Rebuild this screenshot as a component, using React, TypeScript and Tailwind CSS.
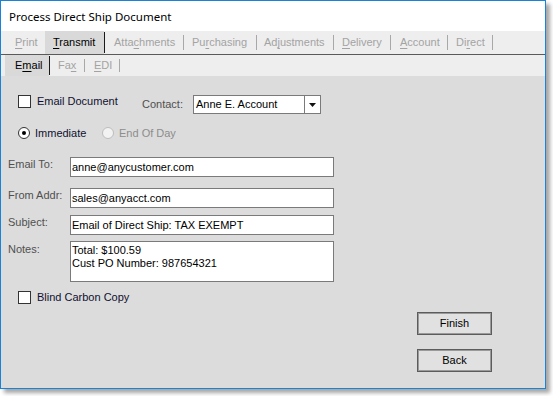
import React from "react";

type Tab = {
  label: string;
  key: number;
  width: string;
  pad: string;
  active?: boolean;
  sep?: "dark" | "light" | "none";
};

const mainTabs: Tab[] = [
  { label: "Print", key: 0, width: "w-[40px]", pad: "pl-[10px]", sep: "none" },
  { label: "Transmit", key: 0, width: "w-[59px]", pad: "pl-[8px]", active: true, sep: "dark" },
  { label: "Attachments", key: 4, width: "w-[78px]", pad: "pl-[9px]", sep: "light" },
  { label: "Purchasing", key: 2, width: "w-[72px]", pad: "pl-[8px]", sep: "light" },
  { label: "Adjustments", key: 2, width: "w-[76px]", pad: "pl-[7px]", sep: "light" },
  { label: "Delivery", key: 0, width: "w-[56px]", pad: "pl-[8px]", sep: "light" },
  { label: "Account", key: 0, width: "w-[56px]", pad: "pl-[9px]", sep: "light" },
  { label: "Direct", key: 2, width: "w-[44px]", pad: "pl-[8px]", sep: "light" },
];

const subTabs: Tab[] = [
  { label: "Email", key: 1, width: "w-[44px]", pad: "pl-[10px]", active: true, sep: "dark" },
  { label: "Fax", key: 2, width: "w-[34px]", pad: "pl-[8px]", sep: "light" },
  { label: "EDI", key: 0, width: "w-[34px]", pad: "pl-[9px]", sep: "light" },
];

function Mnemonic({ text, index }: { text: string; index: number }) {
  return (
    <>
      {text.slice(0, index)}
      <span className="underline underline-offset-[2px]">{text[index]}</span>
      {text.slice(index + 1)}
    </>
  );
}

function TabStrip({ tabs, height }: { tabs: Tab[]; height: string }) {
  return (
    <div className={`flex items-stretch pl-[4px] ${height}`}>
      {tabs.map((t) => (
        <React.Fragment key={t.label}>
          <div
            className={`${t.width} ${t.pad} flex items-center ${
              t.active ? "bg-[#d9d9d9] text-black" : "text-[#a3a3a3]"
            }`}
          >
            <span className="whitespace-nowrap">
              <Mnemonic text={t.label} index={t.key} />
            </span>
          </div>
          {t.sep === "dark" && <div className="w-px bg-[#1a1a1a] my-[1px]" />}
          {t.sep === "light" && <div className="w-px bg-[#a8a8a8] my-[4px]" />}
        </React.Fragment>
      ))}
    </div>
  );
}

function CheckBox() {
  return <div className="w-[13px] h-[13px] bg-white border border-[#333333] shrink-0" />;
}

function Radio({ checked, disabled }: { checked?: boolean; disabled?: boolean }) {
  return (
    <div
      className={`w-[12px] h-[12px] rounded-full border flex items-center justify-center shrink-0 ${
        disabled ? "border-[#bdbdbd] bg-[#f2f2f2]" : "border-[#333333] bg-white"
      }`}
    >
      {checked && <div className="w-[4px] h-[4px] rounded-full bg-black" />}
    </div>
  );
}

function Field({
  label,
  value,
  className,
}: {
  label: string;
  value: string;
  className?: string;
}) {
  return (
    <div className={`flex items-start pl-[7px] ${className ?? ""}`}>
      <div className="w-[62px] text-[#505050] leading-[13px] pt-[1px]">{label}</div>
      <div className="w-[264px] h-[20px] bg-white border border-[#7a7a7a] pl-[1px] flex items-center text-black leading-[13px]">
        {value}
      </div>
    </div>
  );
}

function Button({ label, className }: { label: string; className?: string }) {
  return (
    <div
      className={`w-[75px] h-[23px] bg-[#e1e1e1] border border-[#5c5c5c] shadow-[inset_0_0_0_1px_#9a9a9a] flex items-center justify-center text-black ${
        className ?? ""
      }`}
    >
      {label}
    </div>
  );
}

export default function App() {
  return (
    <div className="w-[553px] h-[396px] bg-white overflow-hidden">
      <div
        className="w-[546px] h-[389px] border border-[#1883d7] flex flex-col shadow-[4px_4px_4px_rgba(0,0,0,0.35)] text-[11px] leading-[13px]"
        style={{ fontFamily: '"Liberation Sans", Arial, sans-serif' }}
      >
        {/* Title bar */}
        <div
          className="h-[30px] bg-white flex items-center pl-[8px] text-[11.5px] text-black"
          style={{ fontFamily: '"Noto Sans", "Segoe UI", sans-serif' }}
        >
          Process Direct Ship Document
        </div>

        {/* Main tabs */}
        <div className="bg-[#eeeeee] border-b border-[#5a5a5a]">
          <TabStrip tabs={mainTabs} height="h-[23px]" />
        </div>

        {/* Sub tabs */}
        <div className="bg-[#eeeeee]">
          <TabStrip tabs={subTabs} height="h-[21px]" />
        </div>

        {/* Content */}
        <div className="flex-1 bg-[#dcdcdc] pt-[19px] flex flex-col">
          <div className="flex items-start h-[19px]">
            <div className="flex items-center gap-[6px] pl-[17px] w-[141px]">
              <CheckBox />
              <span className="text-[#101030]">Email Document</span>
            </div>
            <div className="flex items-center h-[19px]">
              <span className="w-[51px] text-[#505050]">Contact:</span>
              <div className="w-[128px] h-[19px] bg-white border border-[#7a7a7a] flex items-stretch">
                <div className="flex-1 pl-[2px] flex items-center text-black">Anne E. Account</div>
                <div className="w-[16px] border-l border-[#7a7a7a] flex items-center justify-center">
                  <svg width="7" height="4" viewBox="0 0 7 4">
                    <path d="M0 0H7L3.5 4Z" fill="#111111" />
                  </svg>
                </div>
              </div>
            </div>
          </div>

          <div className="flex items-center h-[12px] mt-[13px] pl-[17px]">
            <Radio checked />
            <span className="ml-[5px] w-[67px] text-[#101030]">Immediate</span>
            <Radio disabled />
            <span className="ml-[5px] text-[#8c8c8c]">End Of Day</span>
          </div>

          <Field label="Email To:" value="anne@anycustomer.com" className="mt-[18px]" />
          <Field label="From Addr:" value="sales@anyacct.com" className="mt-[11px]" />
          <Field label="Subject:" value="Email of Direct Ship: TAX EXEMPT" className="mt-[7px]" />

          <div className="flex items-start pl-[7px] mt-[6px]">
            <div className="w-[62px] text-[#505050] pt-[2px]">Notes:</div>
            <div className="w-[264px] h-[41px] bg-white border border-[#7a7a7a] pl-[1px] pt-[2px] text-black">
              <div>Total: $100.59</div>
              <div>Cust PO Number: 987654321</div>
            </div>
          </div>

          <div className="flex items-center gap-[6px] pl-[17px] mt-[9px] h-[13px]">
            <CheckBox />
            <span className="text-[#101030]">Blind Carbon Copy</span>
          </div>

          <div className="flex flex-col items-end pr-[53px] mt-[8px]">
            <Button label="Finish" />
            <Button label="Back" className="mt-[14px]" />
          </div>
        </div>
      </div>
    </div>
  );
}
